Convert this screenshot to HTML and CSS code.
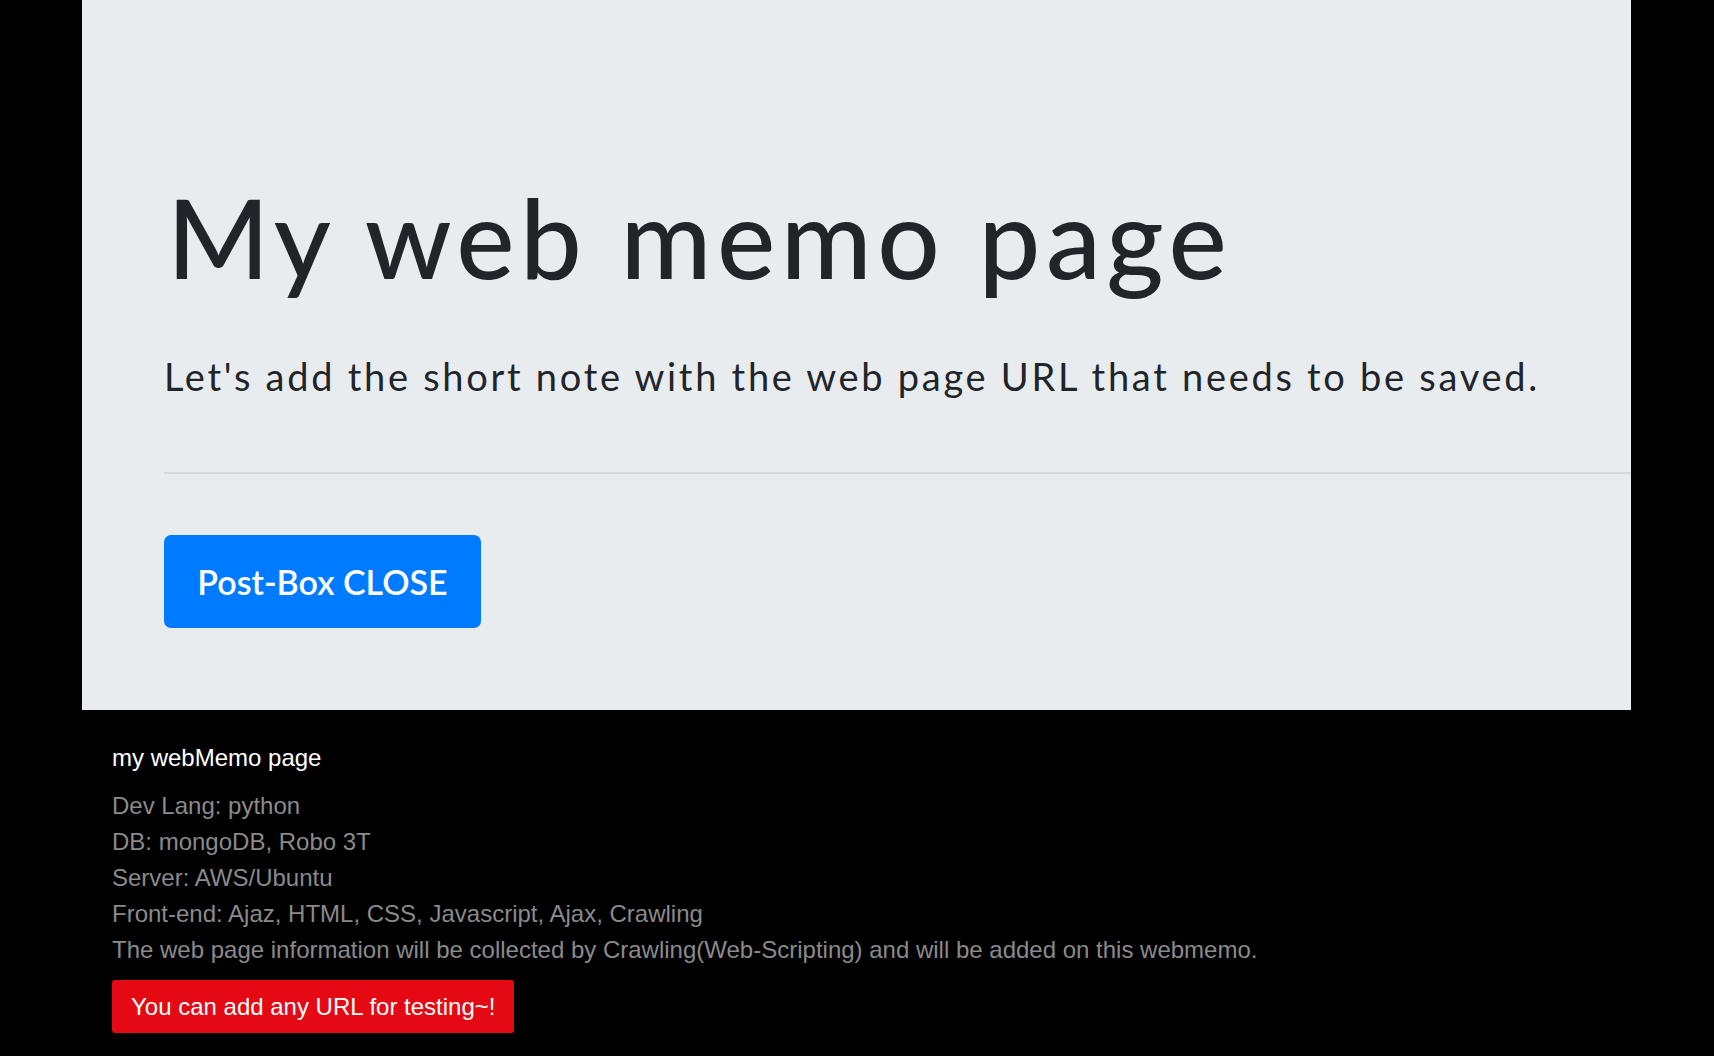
FILE: index.html
```html
<!DOCTYPE html>
<html lang="en">
<head>
<meta charset="utf-8">
<title>my webMemo page</title>
<link rel="stylesheet" href="styles.css">
</head>
<body>
<div class="jumbotron">
  <h1 class="display">My web memo page</h1>
  <p class="lead">Let's add the short note with the web page URL that needs to be saved.</p>
  <hr class="divider">
  <button class="btn-primary" type="button">Post-Box CLOSE</button>
</div>
<footer class="footer">
  <h5 class="footer-title">my webMemo page</h5>
  <p class="footer-line">Dev Lang: python</p>
  <p class="footer-line">DB: mongoDB, Robo 3T</p>
  <p class="footer-line">Server: AWS/Ubuntu</p>
  <p class="footer-line">Front-end: Ajaz, HTML, CSS, Javascript, Ajax, Crawling</p>
  <p class="footer-line">The web page information will be collected by Crawling(Web-Scripting) and will be added on this webmemo.</p>
  <div class="notice">You can add any URL for testing~!</div>
</footer>
</body>
</html>
```

FILE: styles.css
```css
html, body {
  margin: 0;
  padding: 0;
  background: #000;
}

body {
  width: 1714px;
  height: 1056px;
  overflow: hidden;
}

.jumbotron {
  margin: 0 83px 0 82px;
  background: #e9ecef;
  padding: 170px 0 82px 82px;
  color: #212529;
  font-family: Lato, "Open Sans", sans-serif;
}

.display {
  margin: 0 0 0 3px;
  font-size: 110px;
  line-height: 1.2;
  font-weight: 500;
  letter-spacing: 5.5px;
  white-space: nowrap;
}

.lead {
  margin: 52px 0 0 0;
  font-size: 38px;
  line-height: 1.2;
  font-weight: 400;
  letter-spacing: 2.72px;
  white-space: nowrap;
}

.divider {
  margin: 72px 0 61px 0;
  border: 0;
  border-top: 2px solid #d5d8dc;
  height: 0;
}

.btn-primary {
  display: block;
  width: 317px;
  height: 93px;
  background: #007bff;
  color: #fff;
  border: 0;
  border-radius: 7px;
  font-family: Lato, "Open Sans", sans-serif;
  font-size: 34px;
  font-weight: 600;
  padding: 0;
}

.footer {
  padding: 34px 0 0 112px;
  font-family: "Liberation Sans", Arial, sans-serif;
  color: #8a8a8a;
}

.footer-title {
  margin: 0 0 16px 0;
  color: #fff;
  font-size: 24px;
  line-height: 28.8px;
  font-weight: 400;
}

.footer-line {
  margin: 0;
  font-size: 24px;
  line-height: 36px;
}

.notice {
  display: inline-block;
  margin-top: 12px;
  background: #e50914;
  color: #fff;
  font-size: 24px;
  line-height: 53px;
  padding: 0 19px;
  border-radius: 3px;
}
```
